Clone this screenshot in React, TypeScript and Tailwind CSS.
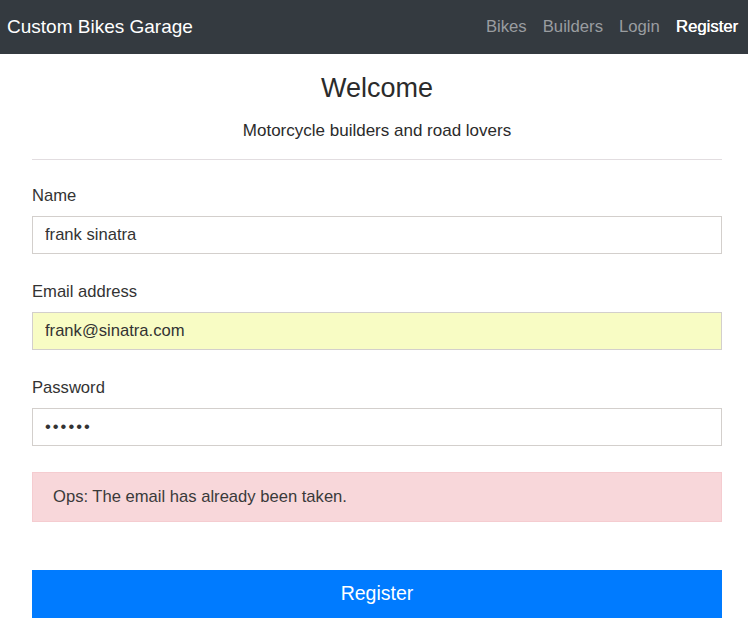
const FIELDS = [
  { label: 'Name', value: 'frank sinatra', type: 'text', autofill: false },
  { label: 'Email address', value: 'frank@sinatra.com', type: 'email', autofill: true },
  { label: 'Password', value: 'secret', type: 'password', autofill: false },
];

export default function App() {
  return (
    <div className="min-h-screen bg-white font-['Liberation_Sans',Arial,sans-serif] text-[#212529]">
      <nav className="flex h-[54px] items-center justify-between bg-[#343a40] pl-[7px] pr-[2px]">
        <span className="text-[19px] text-white">Custom Bikes Garage</span>
        <div className="flex items-center text-[16.7px]">
          <a className="px-2 text-[#9a9da0]">Bikes</a>
          <a className="px-2 text-[#9a9da0]">Builders</a>
          <a className="px-2 text-[#9a9da0]">Login</a>
          <a className="px-2 text-white [text-shadow:0.4px_0_0_#fff]">Register</a>
        </div>
      </nav>

      <main className="mx-[32px] mr-[26px] w-[690px]">
        <h2 className="mt-[18px] text-center text-[27px] leading-[32px] text-[#2b2b2b]">Welcome</h2>
        <p className="mt-[15px] text-center text-[17px] leading-[24px] text-[#2b2b2b]">Motorcycle builders and road lovers</p>
        <hr className="mt-[16px] border-t border-[#e2dde0]" />

        <form className="mt-[24px]" onSubmit={(e) => e.preventDefault()}>
          {FIELDS.map((f) => (
            <div key={f.label} className="mb-[26px]">
              <label className="mb-[8px] block text-[16.6px] leading-[24px] text-[#333]">{f.label}</label>
              <input
                type={f.type}
                defaultValue={f.value}
                className={`block h-[38px] w-full border border-[#d3cfcc] px-[12px] text-[16.6px] text-[#333] outline-none ${
                  f.autofill ? 'bg-[#f8fcc4]' : 'bg-white'
                } ${f.type === 'password' ? 'tracking-[2px] text-[14px]' : ''}`}
              />
            </div>
          ))}

          <div className="border border-[#f5ccd0] bg-[#f8d7da] px-[20px] py-[12px] text-[16.6px] leading-[24px] text-[#3a3a3a]">
            Ops: The email has already been taken.
          </div>

          <button className="mt-[48px] h-[48px] w-full bg-[#007bff] text-[19.5px] text-white">Register</button>
        </form>
      </main>
    </div>
  );
}
